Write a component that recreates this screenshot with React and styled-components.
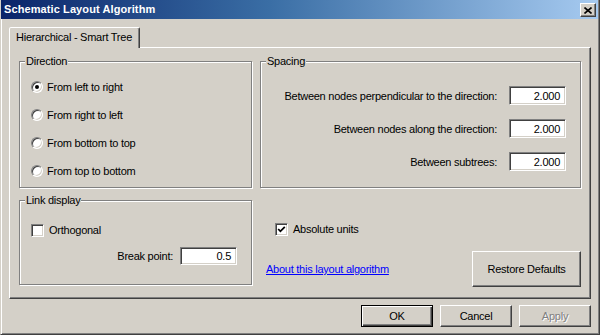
import React from "react";
import styled, { createGlobalStyle } from "styled-components";

const Global = createGlobalStyle`
  html, body { margin: 0; padding: 0; background: #d4d0c8; }
  body { font-family: "Liberation Sans", Arial, sans-serif; font-size: 11px; color: #000; letter-spacing: -0.25px; }
  * { box-sizing: border-box; }
`;

const Window = styled.div`
  width: 600px;
  height: 335px;
  background: #d4d0c8;
  border: 1px solid;
  border-top: 0;
  border-color: #d4d0c8 #404040 #404040 #d4d0c8;
  box-shadow: inset 1px 0 #fff, inset -1px -1px #808080;
  display: flex;
  flex-direction: column;
`;

const TitleBar = styled.div`
  height: 19px;
  margin: 0 1px 0 0;
  background: linear-gradient(to right, #0a246a 0%, #3a6ea5 45%, #a6caf0 100%);
  display: flex;
  align-items: center;
  justify-content: space-between;
  padding: 0 2px 0 3px;
`;

const Title = styled.div`
  color: #fff;
  font-weight: bold;
  font-size: 11px;
  line-height: 13px;
  letter-spacing: 0.1px;
`;

const CloseBtn = styled.div`
  width: 16px;
  height: 14px;
  margin-top: 1px;
  background: #d4d0c8;
  border: 1px solid;
  border-color: #fff #404040 #404040 #fff;
  box-shadow: inset -1px -1px #808080;
  display: flex;
  align-items: center;
  justify-content: center;
`;

const Body = styled.div`
  flex: 1;
  padding: 8px 8px 0 8px;
  display: flex;
  flex-direction: column;
`;

const TabStrip = styled.div`
  display: flex;
  height: 20px;
`;

const Tab = styled.div`
  position: relative;
  z-index: 1;
  height: 21px;
  margin-bottom: -1px;
  padding: 0 7px 2px 6px;
  display: flex;
  align-items: center;
  background: #d4d0c8;
  border: 1px solid;
  border-bottom: 0;
  border-color: #fff #404040 transparent #fff;
  border-radius: 2px 2px 0 0;
  box-shadow: inset -1px 0 #808080;
`;

const Panel = styled.div`
  height: 252px;
  border: 1px solid;
  border-color: #fff #404040 #404040 #fff;
  box-shadow: inset -1px -1px #808080;
  padding: 13px 11px 0 9px;
  display: grid;
  grid-template-columns: 233px 321px;
  grid-template-rows: 127px 87px;
  column-gap: 8px;
  row-gap: 12px;
`;

const Group = styled.div`
  position: relative;
  border: 1px solid #808080;
  box-shadow: 1px 1px 0 #fff, inset 1px 1px 0 #fff;
  height: ${(p) => p.$h}px;
  padding: ${(p) => p.$pad};
  display: flex;
  flex-direction: column;
`;

const Legend = styled.span`
  position: absolute;
  top: -7px;
  left: 5px;
  padding: 0 1px;
  background: #d4d0c8;
  line-height: 13px;
`;

const RadioRow = styled.label`
  height: 28px;
  display: flex;
  align-items: center;
  gap: 4px;
`;

const Radio = styled.span`
  position: relative;
  width: 12px;
  height: 12px;
  border-radius: 50%;
  border: 1px solid;
  border-color: #808080 #fff #fff #808080;
  box-shadow: inset 1px 1px #404040, inset -1px -1px #d4d0c8;
  background: #fff;
  flex: none;
  &::after {
    content: "";
    display: ${(p) => (p.$checked ? "block" : "none")};
    position: absolute;
    left: 3px;
    top: 3px;
    width: 4px;
    height: 4px;
    border-radius: 50%;
    background: #000;
  }
`;

const FieldRow = styled.div`
  height: ${(p) => p.$h || 33}px;
  margin-top: ${(p) => p.$mt || 0}px;
  display: flex;
  align-items: center;
  justify-content: flex-end;
  gap: ${(p) => p.$gap}px;
`;

const NumInput = styled.div`
  width: 57px;
  height: ${(p) => p.$h || 19}px;
  background: #fff;
  border: 1px solid;
  border-color: #808080 #fff #fff #808080;
  box-shadow: inset 1px 1px #404040, inset -1px -1px #d4d0c8;
  display: flex;
  align-items: center;
  justify-content: flex-end;
  padding-right: 5px;
`;

const CheckRow = styled.label`
  height: 20px;
  display: flex;
  align-items: center;
  gap: 5px;
  margin-left: ${(p) => p.$ml || 0}px;
`;

const CheckBox = styled.span`
  width: 13px;
  height: 13px;
  flex: none;
  background: #fff;
  border: 1px solid;
  border-color: #808080 #fff #fff #808080;
  box-shadow: inset 1px 1px #404040, inset -1px -1px #d4d0c8;
  display: flex;
  align-items: center;
  justify-content: center;
`;

const RightBottom = styled.div`
  display: flex;
  flex-direction: column;
  padding-top: 19px;
`;

const Footer = styled.div`
  margin-top: 12px;
  display: flex;
  align-items: center;
  justify-content: space-between;
  padding-left: 6px;
`;

const Link = styled.a`
  color: #0000ff;
  text-decoration: underline;
  cursor: pointer;
`;

const Button = styled.div`
  width: ${(p) => p.$w}px;
  height: ${(p) => p.$h}px;
  display: flex;
  align-items: center;
  justify-content: center;
  background: #d4d0c8;
  border: 1px solid;
  border-color: ${(p) => (p.$default ? "#000" : "#fff #404040 #404040 #fff")};
  box-shadow: ${(p) =>
    p.$default
      ? "inset 1px 1px #fff, inset -1px -1px #404040, inset -2px -2px #808080"
      : "inset -1px -1px #808080"};
  color: ${(p) => (p.$disabled ? "#808080" : "#000")};
  text-shadow: ${(p) => (p.$disabled ? "1px 1px 0 #fff" : "none")};
`;

const ButtonRow = styled.div`
  display: flex;
  justify-content: flex-end;
  gap: 7px;
  margin-top: 6px;
`;

const Check = () => (
  <svg width="9" height="9" viewBox="0 0 9 9">
    <polyline points="1.2,4 3.4,6.3 7.8,1.8" fill="none" stroke="#000" strokeWidth="1.8" />
  </svg>
);

const XIcon = () => (
  <svg width="8" height="7" viewBox="0 0 8 7">
    <path d="M0.5 0.5 L7.5 6.5 M7.5 0.5 L0.5 6.5" stroke="#000" strokeWidth="1.6" />
  </svg>
);

const directions = [
  ["From left to right", true],
  ["From right to left", false],
  ["From bottom to top", false],
  ["From top to bottom", false],
];

const spacing = [
  "Between nodes perpendicular to the direction:",
  "Between nodes along the direction:",
  "Between subtrees:",
];

export default function App() {
  return (
    <>
      <Global />
      <Window>
        <TitleBar>
          <Title>Schematic Layout Algorithm</Title>
          <CloseBtn>
            <XIcon />
          </CloseBtn>
        </TitleBar>
        <Body>
          <TabStrip>
            <Tab>Hierarchical - Smart Tree</Tab>
          </TabStrip>
          <Panel>
            <Group $h={127} $pad="11px 0 0 11px">
              <Legend>Direction</Legend>
              {directions.map(([t, c]) => (
                <RadioRow key={t}>
                  <Radio $checked={c} />
                  {t}
                </RadioRow>
              ))}
            </Group>
            <Group $h={127} $pad="17px 14px 0 0">
              <Legend>Spacing</Legend>
              {spacing.map((t) => (
                <FieldRow key={t} $gap={12}>
                  <span>{t}</span>
                  <NumInput>2.000</NumInput>
                </FieldRow>
              ))}
            </Group>
            <Group $h={85} $pad="19px 14px 0 11px">
              <Legend>Link display</Legend>
              <CheckRow>
                <CheckBox />
                Orthogonal
              </CheckRow>
              <FieldRow $h={20} $mt={6} $gap={7}>
                <span>Break point:</span>
                <NumInput $h={18}>0.5</NumInput>
              </FieldRow>
            </Group>
            <RightBottom>
              <CheckRow $ml={15}>
                <CheckBox>
                  <Check />
                </CheckBox>
                Absolute units
              </CheckRow>
              <Footer>
                <Link>About this layout algorithm</Link>
                <Button $w={109} $h={36}>Restore Defaults</Button>
              </Footer>
            </RightBottom>
          </Panel>
          <ButtonRow>
            <Button $w={72} $h={22} $default>OK</Button>
            <Button $w={72} $h={22}>Cancel</Button>
            <Button $w={72} $h={22} $disabled>Apply</Button>
          </ButtonRow>
        </Body>
      </Window>
    </>
  );
}
